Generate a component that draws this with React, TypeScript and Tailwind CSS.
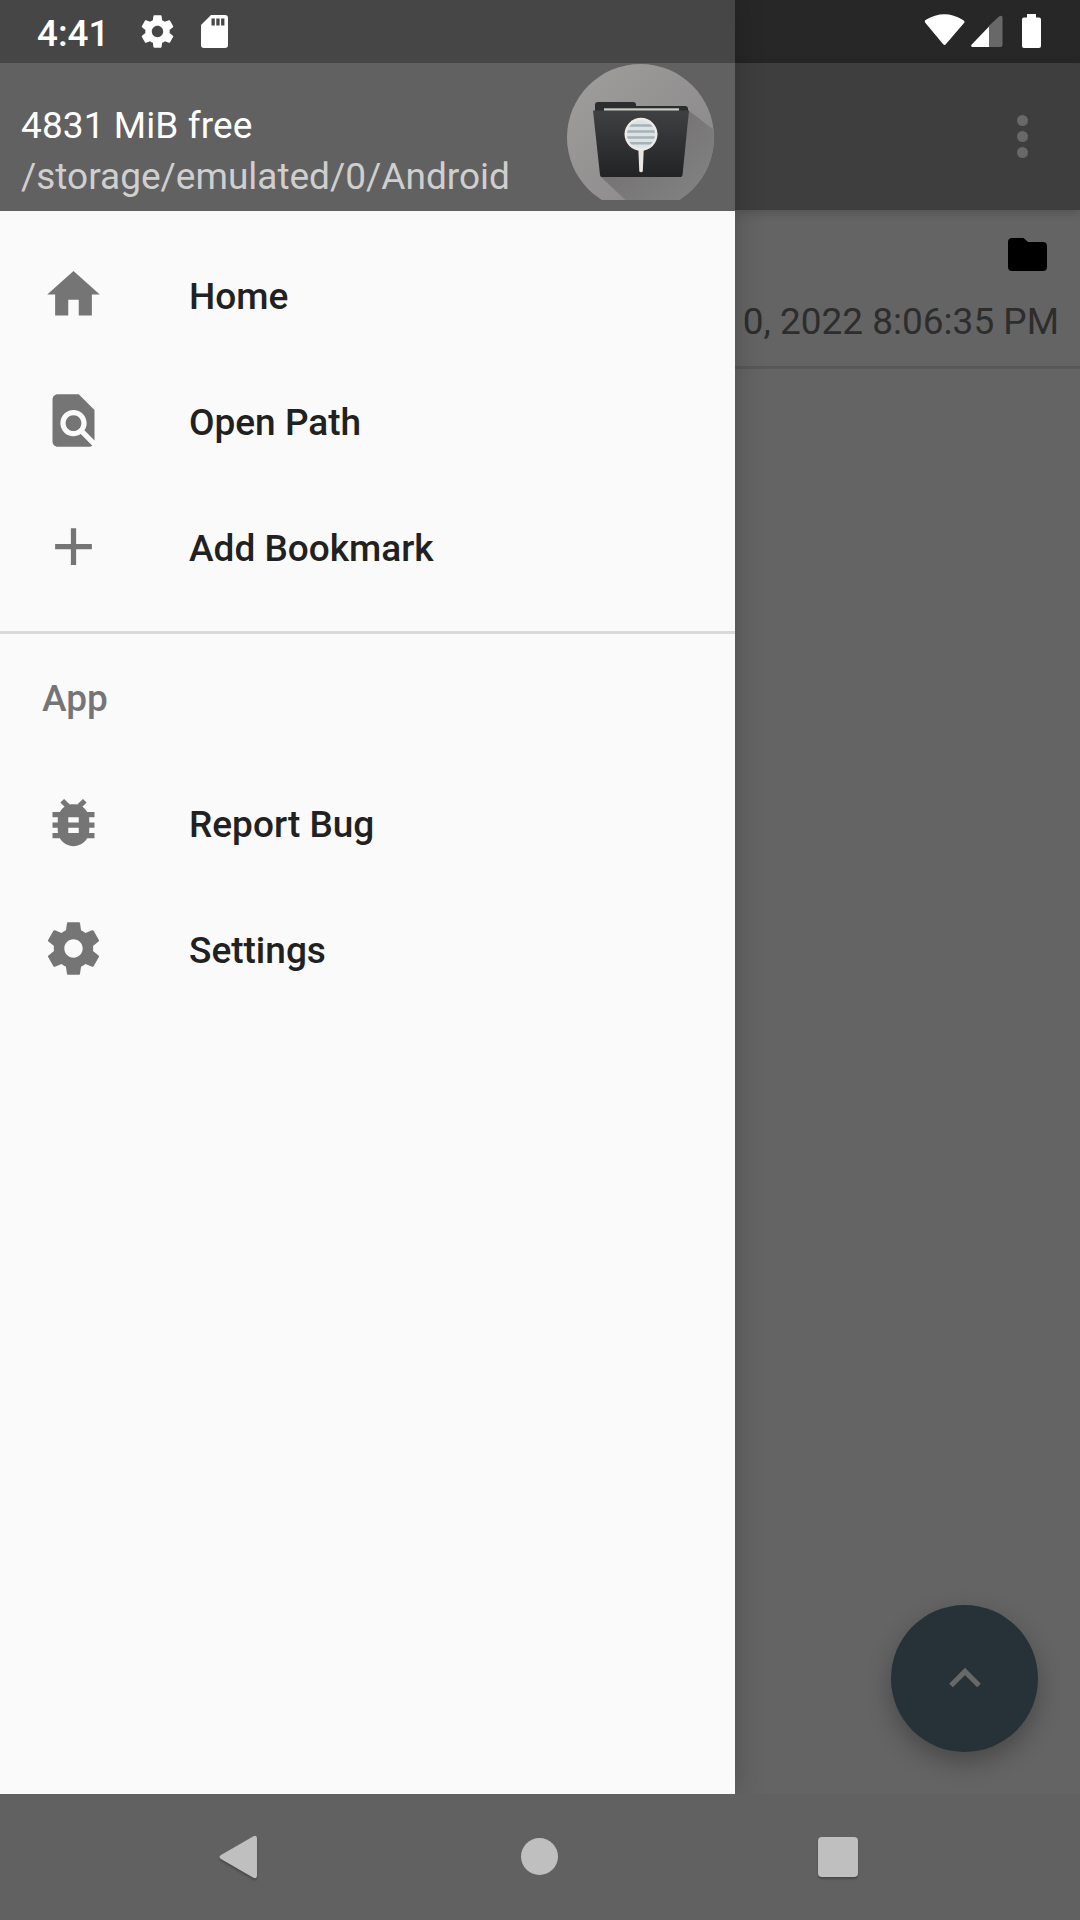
import React from "react";

const HOME = "M10 20v-6h4v6h5v-8h3L12 3 2 12h3v8z";
const FIND =
  "M20 19.59V8l-6-6H6c-1.1 0-1.99.9-1.99 2L4 20c0 1.1.89 2 1.99 2H18c.45 0 .85-.15 1.19-.4l-4.43-4.43c-.8.52-1.74.83-2.76.83-2.76 0-5-2.24-5-5s2.24-5 5-5 5 2.24 5 5c0 1.02-.31 1.96-.83 2.75L20 19.59zM9 13c0 1.66 1.34 3 3 3s3-1.34 3-3-1.34-3-3-3-3 1.34-3 3z";
const ADD = "M19 13h-6v6h-2v-6H5v-2h6V5h2v6h6v2z";
const BUG =
  "M20 8h-2.81c-.45-.78-1.07-1.45-1.82-1.96L17 4.41 15.59 3l-2.17 2.17C12.96 5.06 12.49 5 12 5c-.49 0-.96.06-1.41.17L8.41 3 7 4.41l1.62 1.63C7.88 6.55 7.26 7.22 6.81 8H4v2h2.09c-.05.33-.09.66-.09 1v1H4v2h2v1c0 .34.04.67.09 1H4v2h2.81c1.04 1.79 2.97 3 5.19 3s4.15-1.21 5.19-3H20v-2h-2.09c.05-.33.09-.66.09-1v-1h2v-2h-2v-1c0-.34-.04-.67-.09-1H20V8zm-6 8h-4v-2h4v2zm0-4h-4v-2h4v2z";
const GEAR =
  "M19.43 12.98c.04-.32.07-.64.07-.98s-.03-.66-.07-.98l2.11-1.65c.19-.15.24-.42.12-.64l-2-3.46c-.12-.22-.39-.3-.61-.22l-2.49 1c-.52-.4-1.08-.73-1.69-.98l-.38-2.65C14.46 2.18 14.25 2 14 2h-4c-.25 0-.46.18-.49.42l-.38 2.65c-.61.25-1.17.59-1.69.98l-2.49-1c-.23-.09-.49 0-.61.22l-2 3.46c-.13.22-.07.49.12.64l2.11 1.65c-.04.32-.07.65-.07.98s.03.66.07.98l-2.11 1.65c-.19.15-.24.42-.12.64l2 3.46c.12.22.39.3.61.22l2.49-1c.52.4 1.08.73 1.69.98l.38 2.65c.03.24.24.42.49.42h4c.25 0 .46-.18.49-.42l.38-2.65c.61-.25 1.17-.59 1.69-.98l2.49 1c.23.09.49 0 .61-.22l2-3.46c.12-.22.07-.49-.12-.64l-2.11-1.65zM12 15.5c-1.93 0-3.5-1.57-3.5-3.5s1.57-3.5 3.5-3.5 3.5 1.57 3.5 3.5-1.57 3.5-3.5 3.5z";

function Icon({ d, className }: { d: string; className: string }) {
  return (
    <svg viewBox="0 0 24 24" className={className} fill="currentColor">
      <path d={d} />
    </svg>
  );
}

function MenuItem({ d, label }: { d: string; label: string }) {
  return (
    <li className="flex h-[126px] items-center pl-[42px]">
      <Icon d={d} className="mb-[2px] size-[63px] shrink-0 text-[#757575]" />
      <span className="ml-[84px] pt-[3px] font-medium text-[#212121]">{label}</span>
    </li>
  );
}

function AppLogo() {
  return (
    <svg viewBox="0 0 147 136" className="mt-px h-[136px] w-[147px]">
      <defs>
        <linearGradient id="disc" x1="0" y1="0" x2="1" y2="1">
          <stop offset="0" stopColor="#a19f9d" />
          <stop offset="0.55" stopColor="#929090" />
          <stop offset="1" stopColor="#858484" />
        </linearGradient>
        <linearGradient id="cast" x1="0.3" y1="0.3" x2="0.9" y2="0.9">
          <stop offset="0" stopColor="#757374" />
          <stop offset="1" stopColor="#868686" />
        </linearGradient>
        <linearGradient id="front" x1="0" y1="0" x2="0" y2="1">
          <stop offset="0" stopColor="#3e4042" />
          <stop offset="1" stopColor="#222325" />
        </linearGradient>
        <clipPath id="round">
          <circle cx="73.5" cy="73.5" r="73.5" />
        </clipPath>
        <clipPath id="lens">
          <circle cx="74" cy="70.3" r="14" />
        </clipPath>
      </defs>
      <g clipPath="url(#round)">
        <rect width="147" height="147" fill="url(#disc)" />
        <path d="M121 46L160 76V160H84L33 112z" fill="url(#cast)" />
      </g>
      <path d="M28 48V41q0-3 3-3H66q3 0 3 3v1h49q3 0 3 3v5z" fill="#2b2c2e" />
      <rect x="37" y="44.3" width="75" height="3" fill="#c9cbc5" />
      <path d="M26 46.500H122L115.500 111q-.2 2-2 2H35q-1.800 0-2-2z" fill="url(#front)" />
      <path d="M71.300 84h5.500l-1 23.500q-1.600 1.500-3.500 0z" fill="#e9e6e4" />
      <circle cx="74" cy="70.300" r="16.500" fill="#eeeae8" />
      <g clipPath="url(#lens)">
        <rect x="59" y="55" width="31" height="31" fill="#dbe3e6" />
        <path d="M59 61.500h31M59 67.500h31M59 73.500h31M59 79.300h31" stroke="#a8b1b6" strokeWidth="2.600" />
      </g>
    </svg>
  );
}

function Drawer() {
  return (
    <aside className="relative z-10 h-[1794px] w-[735px] shrink-0 bg-[#fafafa] shadow-[0_0_28px_rgba(0,0,0,0.22)]">
      <div className="flex h-[63px] items-center bg-[#464646] pl-[37px] text-[36.75px] text-white">
        <span className="pt-[3px] font-medium">4:41</span>
        <Icon d={GEAR} className="ml-[28.5px] size-[39px]" />
        <svg viewBox="0 0 27 33" className="ml-[24.5px] h-[33px] w-[27px]">
          <path
            fillRule="evenodd"
            fill="#fff"
            d="M10 0H24q3 0 3 3V30q0 3-3 3H3q-3 0-3-3V10zM10.500 3.500v7h3.300v-7zM15.300 3.500v7h3.300v-7zM20.100 3.500v7h3.300v-7z"
          />
        </svg>
      </div>
      <header className="flex h-[148px] justify-between bg-[#616161] pr-[21px] pl-[21px]">
        <div className="pt-[37px] leading-[51px]">
          <p className="tracking-[0.1px] text-white">4831 MiB free</p>
          <p className="text-[#cfcfcf]">/storage/emulated/0/Android</p>
        </div>
        <AppLogo />
      </header>
      <nav>
        <ul className="py-[21px]">
          <MenuItem d={HOME} label="Home" />
          <MenuItem d={FIND} label="Open Path" />
          <MenuItem d={ADD} label="Add Bookmark" />
        </ul>
        <div className="h-[3px] bg-[#dadada]" />
        <h2 className="flex h-[126px] items-center pl-[42px] pt-[3px] font-medium text-[#757575]">App</h2>
        <ul>
          <MenuItem d={BUG} label="Report Bug" />
          <MenuItem d={GEAR} label="Settings" />
        </ul>
      </nav>
    </aside>
  );
}

function DimmedPage() {
  return (
    <main className="flex h-[1794px] grow flex-col bg-[#646464]">
      <div className="flex h-[63px] items-start justify-end bg-[#272727] pr-[38px]">
        <svg viewBox="0 0 118 36" className="mt-[13px] h-[36px] w-[118px]">
          <path d="M1.500 10Q0 8.500 1.500 7Q20.500-4.500 39 7Q41.500 8.500 40 10L22 31Q20.500 33 19 31z" fill="#fff" />
          <path d="M65 12.800L75 3.500Q78.500 1.500 78.500 5V32q0 2-2 2H65z" fill="#686868" />
          <path d="M65 13.500V34H48.500q-2-.2-1-2.200z" fill="#fff" />
          <path d="M103 1h9v3.500h3q2 0 2 2V33q0 2-2 2H100q-2 0-2-2V6.500q0-2 2-2h3z" fill="#fff" />
        </svg>
      </div>
      <div className="z-[1] flex h-[147px] items-center justify-end bg-[#3e3e3e] pr-[52px] shadow-[0_2px_10px_rgba(0,0,0,0.2)]">
        <div className="flex flex-col gap-[5px]">
          <i className="size-[11px] rounded-full bg-[#686868]" />
          <i className="size-[11px] rounded-full bg-[#686868]" />
          <i className="size-[11px] rounded-full bg-[#686868]" />
        </div>
      </div>
      <section className="flex h-[159px] flex-col items-end border-b-[3px] border-[#585858]">
        <svg viewBox="0 0 39 33" className="mt-[28px] mr-[33px] h-[33px] w-[39px]">
          <path d="M4 0H15.500L20 4H35q4 0 4 4V29q0 4-4 4H4q-4 0-4-4V4q0-4 4-4z" />
        </svg>
        <time className="mt-[29px] mr-[21px] leading-[43px] whitespace-nowrap text-[#2d2d2d]">0, 2022 8:06:35 PM</time>
      </section>
      <button className="mt-auto mr-[42px] mb-[42px] flex size-[147px] items-center justify-center self-end rounded-full bg-[#273238] shadow-[0_10px_24px_rgba(0,0,0,0.28)]">
        <svg viewBox="0 0 32 20" className="mb-px h-[20px] w-[32px]" fill="none">
          <path d="M2 17.500L16 3.500L30 17.500" stroke="#686868" strokeWidth="5.300" />
        </svg>
      </button>
    </main>
  );
}

export default function App() {
  return (
    <div className="h-[1920px] w-[1080px] overflow-hidden bg-[#616161] font-[Roboto,sans-serif] text-[37px] leading-[43px]">
      <div className="flex h-[1794px] overflow-hidden">
        <Drawer />
        <DimmedPage />
      </div>
      <footer className="flex h-[126px] items-center justify-between bg-[#616161] pr-[222px] pb-px pl-[219px]">
        <svg viewBox="0 0 38 44" className="h-[44px] w-[38px] drop-shadow-[0_2px_1px_rgba(0,0,0,0.25)]">
          <path d="M2 20L34 1.500Q38-.5 38 3.500V40.500Q38 44.500 34 42.500L2 24Q-1 22 2 20z" fill="#bfbfbf" />
        </svg>
        <i className="ml-[4px] size-[37px] rounded-full bg-[#bfbfbf]" />
        <i className="size-[40px] rounded-[4px] bg-[#bfbfbf] shadow-[0_2px_2px_rgba(0,0,0,0.25)]" />
      </footer>
    </div>
  );
}
